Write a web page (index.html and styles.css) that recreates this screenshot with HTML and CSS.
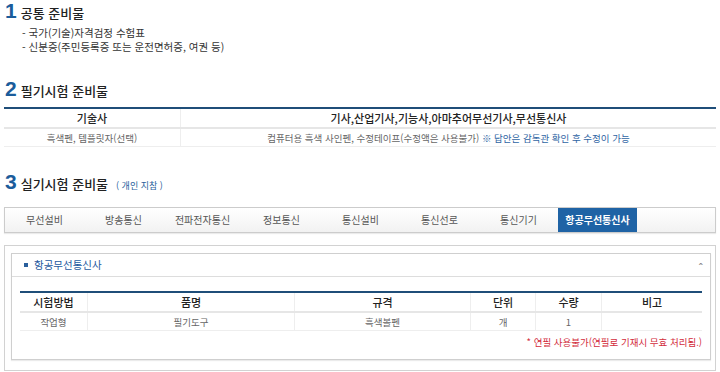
FILE: index.html
```html
<!DOCTYPE html>
<html lang="ko">
<head>
    <meta charset="UTF-8">
    <title>준비물 안내</title>
    <link rel="stylesheet" href="styles.css">
</head>
<body>
    <h2 class="sec-title first"><span class="num">1</span>공통 준비물</h2>
    <ul class="dash-list">
        <li>- 국가(기술)자격검정 수험표</li>
        <li>- 신분증(주민등록증 또는 운전면허증, 여권 등)</li>
    </ul>

    <h2 class="sec-title"><span class="num">2</span>필기시험 준비물</h2>
    <table class="tbl written">
        <thead>
            <tr>
                <th class="col-a">기술사</th>
                <th>기사,산업기사,기능사,아마추어무선기사,무선통신사</th>
            </tr>
        </thead>
        <tbody>
            <tr>
                <td>흑색펜, 템플릿자(선택)</td>
                <td>컴퓨터용 흑색 사인펜, 수정테이프(수정액은 사용불가) <span class="note-blue">※ 답안은 감독관 확인 후 수정이 가능</span></td>
            </tr>
        </tbody>
    </table>

    <h2 class="sec-title third"><span class="num">3</span>실기시험 준비물 <span class="sub">( 개인 지참 )</span></h2>
    <ul class="tabs">
        <li>무선설비</li>
        <li>방송통신</li>
        <li>전파전자통신</li>
        <li>정보통신</li>
        <li>통신설비</li>
        <li>통신선로</li>
        <li>통신기기</li>
        <li class="active">항공무선통신사</li>
    </ul>

    <div class="box">
        <div class="panel">
            <div class="panel-head">
                <span class="bullet"></span>항공무선통신사
                <span class="toggle">&#710;</span>
            </div>
            <div class="panel-body">
                <table class="tbl practical">
                    <thead>
                        <tr>
                            <th class="c1">시험방법</th>
                            <th class="c2">품명</th>
                            <th class="c3">규격</th>
                            <th class="c4">단위</th>
                            <th class="c5">수량</th>
                            <th>비고</th>
                        </tr>
                    </thead>
                    <tbody>
                        <tr>
                            <td>작업형</td>
                            <td>필기도구</td>
                            <td>흑색볼펜</td>
                            <td>개</td>
                            <td>1</td>
                            <td></td>
                        </tr>
                    </tbody>
                </table>
                <p class="warn">* 연필 사용불가(연필로 기재시 무효 처리됨.)</p>
            </div>
        </div>
    </div>
</body>
</html>
```
FILE: styles.css
```css
body {
    margin: 0;
    padding: 0 4px;
    font-family: "Noto Sans CJK KR", "Noto Sans", sans-serif;
    color: #333;
    background: #fff;
}
.sec-title {
    margin: 23px 0 0;
    height: 24px;
    line-height: 24px;
    font-size: 13px;
    font-weight: 500;
    color: #222;
    display: flex;
    align-items: baseline;
}
.sec-title.first {
    margin-top: 0;
    height: 22px;
    line-height: 22px;
}
.sec-title.third {
    margin-top: 23px;
}
.num {
    font-family: "Liberation Sans", sans-serif;
    font-size: 21px;
    font-weight: bold;
    color: #1b5c9b;
    margin: 0 4px 0 1px;
}
.sub {
    font-size: 9px;
    font-weight: normal;
    color: #2a5f9c;
    margin-left: 8px;
}
.dash-list {
    list-style: none;
    margin: 4px 0 0;
    padding: 0 0 0 18px;
    font-size: 10.5px;
    line-height: 14px;
    color: #333;
}
.tbl {
    width: 100%;
    border-collapse: collapse;
    border-top: 2px solid #1f4e79;
}
.tbl th {
    height: 18px;
    padding: 0;
    font-size: 11px;
    font-weight: 500;
    color: #222;
    border-bottom: 2px solid #e6e6e6;
    border-left: 1px solid #eee;
}
.tbl td {
    height: 17px;
    padding: 0;
    font-size: 9.5px;
    color: #666;
    text-align: center;
    border-bottom: 1px solid #eee;
    border-left: 1px solid #eee;
}
.tbl th:first-child,
.tbl td:first-child {
    border-left: none;
}
.written {
    margin-top: 6px;
}
.written .col-a {
    width: 176px;
}
.note-blue {
    color: #2e64a3;
}
.tabs {
    list-style: none;
    margin: 13px 0 0;
    padding: 0;
    height: 24px;
    display: flex;
    border: 1px solid #ccc;
    background: linear-gradient(#fff, #f2f2f2);
    box-shadow: 0 1px 1px rgba(0, 0, 0, 0.08);
}
.tabs li {
    width: 79px;
    flex: none;
    text-align: center;
    font-size: 10px;
    line-height: 24px;
    color: #555;
}
.tabs li.active {
    background: #1f63a5;
    color: #fff;
    font-weight: bold;
}
.box {
    margin-top: 12px;
    border: 1px solid #d2d2d2;
    padding: 7px 4px 10px 6px;
}
.panel {
    border: 1px solid #cfcfcf;
    box-shadow: 0 1px 1px rgba(0, 0, 0, 0.08);
}
.panel-head {
    height: 22px;
    line-height: 22px;
    border-bottom: 1px solid #ddd;
    padding-left: 12px;
    font-size: 10.5px;
    color: #2559a0;
    display: flex;
    align-items: center;
}
.bullet {
    width: 4px;
    height: 4px;
    background: #2a5f9c;
    margin-right: 6px;
}
.toggle {
    margin-left: auto;
    margin-right: 7px;
    font-size: 11px;
    color: #888;
    line-height: 22px;
    padding-top: 4px;
}
.panel-body {
    padding: 14px 8px 0;
}
.practical .c1 { width: 67px; }
.practical .c2 { width: 206px; }
.practical .c3 { width: 175px; }
.practical .c4 { width: 64px; }
.practical .c5 { width: 65px; }
.warn {
    margin: 0;
    height: 28px;
    line-height: 22px;
    text-align: right;
    font-size: 9.5px;
    color: #d22c3c;
}
```
